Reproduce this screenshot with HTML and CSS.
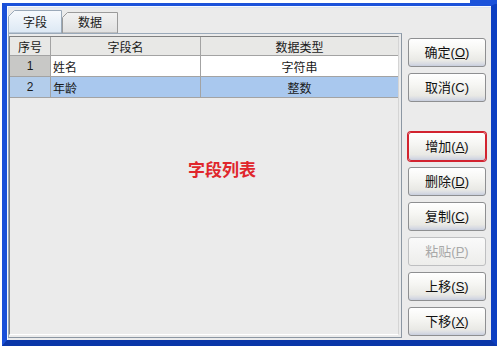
FILE: index.html
```html
<!DOCTYPE html>
<html>
<head>
<meta charset="utf-8">
<link rel="stylesheet" href="styles.css">
</head>
<body>
<div class="window">
  <div class="content">
    <div class="left">
      <div class="tabs">
        <div class="tab on">
          <svg class="tab-shape" width="54" height="23" viewBox="0 0 54 23">
            <defs>
              <linearGradient id="tg1" x1="0" y1="0" x2="0" y2="1">
                <stop offset="0" stop-color="#F7FAFD"/>
                <stop offset="1" stop-color="#DCE8F4"/>
              </linearGradient>
            </defs>
            <polygon points="0.5,23 0.5,6.5 6.5,0.5 53.5,0.5 53.5,23" fill="url(#tg1)" stroke="#9AA9B9"/>
          </svg>
          <span class="tab-label">字段</span>
        </div>
        <div class="tab off">
          <svg class="tab-shape" width="56" height="21" viewBox="0 0 56 21">
            <defs>
              <linearGradient id="tg2" x1="0" y1="0" x2="0" y2="1">
                <stop offset="0" stop-color="#F2F2F2"/>
                <stop offset="1" stop-color="#E0E0E0"/>
              </linearGradient>
            </defs>
            <polygon points="0.5,21 0.5,5.5 5.5,0.5 55.5,0.5 55.5,21" fill="url(#tg2)" stroke="#9A9A9A"/>
          </svg>
          <span class="tab-label">数据</span>
        </div>
      </div>
      <div class="panel">
        <div class="grid">
          <div class="row hdr">
            <div class="cell c1">序号</div>
            <div class="cell c2">字段名</div>
            <div class="cell c3">数据类型</div>
          </div>
          <div class="row">
            <div class="cell c1 rowhead">1</div>
            <div class="cell c2 left-text">姓名</div>
            <div class="cell c3">字符串</div>
          </div>
          <div class="row sel">
            <div class="cell c1">2</div>
            <div class="cell c2 left-text">年龄</div>
            <div class="cell c3">整数</div>
          </div>
          <div class="note">字段列表</div>
        </div>
      </div>
    </div>
    <div class="buttons">
      <div class="btn">确定(<u>O</u>)</div>
      <div class="btn">取消(C)</div>
      <div class="btn focus gap">增加(<u>A</u>)</div>
      <div class="btn">删除(<u>D</u>)</div>
      <div class="btn">复制(<u>C</u>)</div>
      <div class="btn disabled">粘贴(<u>P</u>)</div>
      <div class="btn">上移(<u>S</u>)</div>
      <div class="btn">下移(<u>X</u>)</div>
    </div>
  </div>
</div>
</body>
</html>
```

FILE: styles.css
```css
html, body {
  margin: 0;
  padding: 0;
  background: #ffffff;
}

body {
  font-family: "Liberation Sans", "Noto Sans CJK SC", sans-serif;
  color: #1a1a1a;
}

.window {
  position: relative;
  margin: 3px 0 0 2px;
  width: 484px;
  height: 334px;
  border-style: solid;
  border-width: 3px 6px 6px 5px;
  border-color: #1B52DA #0C3FC2 #0A36A8 #1A50D8;
  background: #EBEBEB;
  box-shadow: inset 1px 1px 0 #F6F9FF, inset 2px 2px 0 #DDE3EE;
}

.window::before {
  content: "";
  position: absolute;
  top: -6px;
  right: -6px;
  width: 27px;
  height: 4px;
  background: #1B52DA;
}

.content {
  display: flex;
  padding: 4px 0 0 1px;
}

.left {
  width: 394px;
  display: flex;
  flex-direction: column;
}

.tabs {
  height: 23px;
  display: flex;
  align-items: flex-end;
}

.tab {
  position: relative;
  display: flex;
  align-items: center;
  justify-content: center;
  font-size: 12px;
}

.tab.on {
  width: 54px;
  height: 23px;
  z-index: 2;
  margin-bottom: -1px;
  height: 24px;
}

.tab.off {
  width: 56px;
  height: 21px;
}

.tab-shape {
  position: absolute;
  left: 0;
  top: 0;
}

.tab-label {
  position: relative;
  line-height: 14px;
  padding-top: 1px;
}

.panel {
  height: 305px;
  box-sizing: border-box;
  border: 1px solid #9AA9B9;
  border-right-color: #8C97A3;
  border-bottom-color: #8C97A3;
  padding: 2px 2px 2px 0;
  display: flex;
  background: #EBEBEB;
}

.grid {
  flex: 1;
  border: 1px solid #808080;
  border-right-color: #D4D4D4;
  border-bottom-color: #FFFFFF;
  background: #EBEBEB;
  display: flex;
  flex-direction: column;
}

.row {
  display: flex;
  height: 21px;
  font-size: 12px;
}

.row.hdr {
  height: 19px;
  background: #E8E8E6;
}

.cell {
  box-sizing: border-box;
  border-right: 1px solid #A3A3A3;
  border-bottom: 1px solid #A3A3A3;
  display: flex;
  align-items: center;
  justify-content: center;
  background: #FFFFFF;
}

.hdr .cell {
  background: #E8E8E6;
}

.c1 {
  width: 41px;
}

.c2 {
  width: 150px;
}

.c3 {
  flex: 1;
  border-right: none;
}

.left-text {
  justify-content: flex-start;
  padding-left: 2px;
}

.rowhead {
  background: #C8C8C6;
}

.sel .cell {
  background: #A9C8EE;
}

.sel .c1 {
  background: #B3CDEB;
}

.note {
  margin: 62px 0 0 178px;
  font-size: 17px;
  line-height: 18px;
  font-weight: bold;
  color: #E0262C;
  font-family: "Noto Sans CJK SC", sans-serif;
}

.buttons {
  width: 78px;
  margin-left: 6px;
  padding-top: 28px;
  display: flex;
  flex-direction: column;
  gap: 6px;
}

.btn {
  height: 29px;
  box-sizing: border-box;
  border: 1px solid #8E8F91;
  border-radius: 3px;
  background: linear-gradient(#FFFFFF 0%, #F6F6F3 40%, #E9E9E5 80%, #D8DBE3 92%, #C8CEDD 100%);
  font-size: 13px;
  line-height: 27px;
  text-align: center;
  color: #111;
}

.btn u {
  text-underline-offset: 1px;
}

.btn.gap {
  margin-top: 24px;
}

.btn.focus {
  border-color: #D2232F;
  box-shadow: 0 0 0 1px #D2232F;
}

.btn.disabled {
  color: #A8A8A8;
  border-color: #BEBFC1;
  background: linear-gradient(#FAFAFA, #EDEDEB);
}
```
